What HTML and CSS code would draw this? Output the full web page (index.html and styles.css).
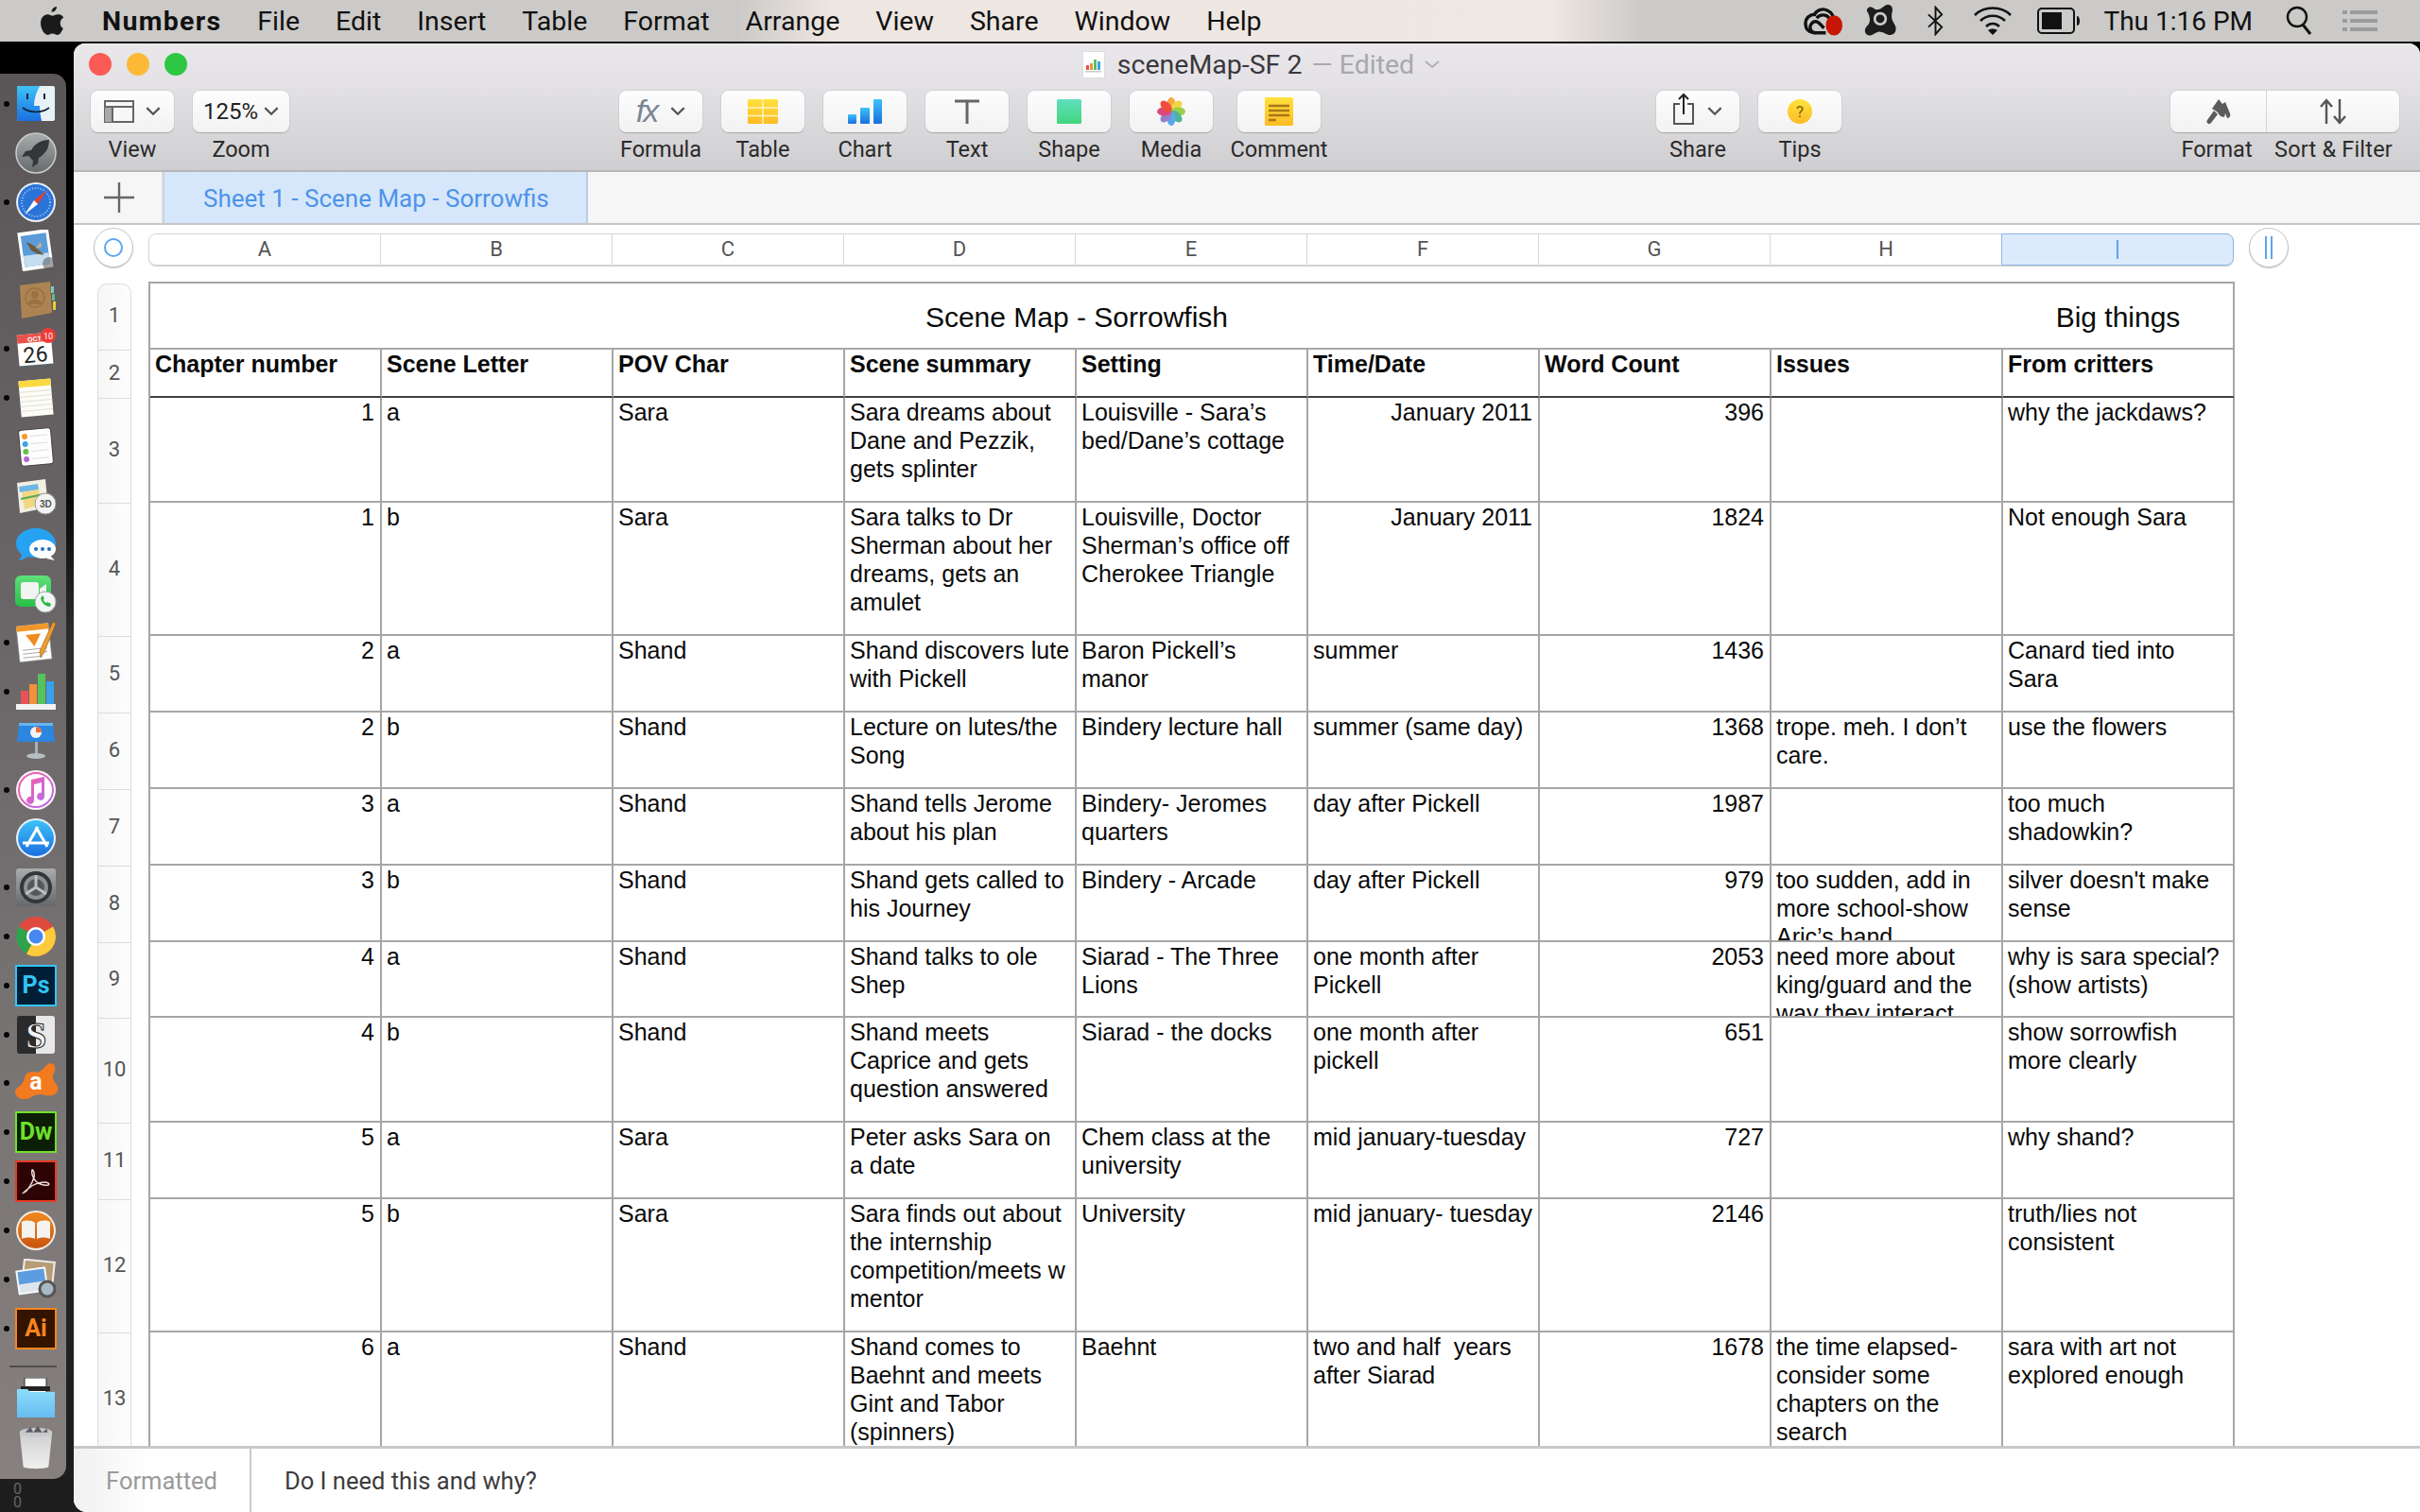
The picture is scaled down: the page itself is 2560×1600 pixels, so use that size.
FILE: index.html
```html
<!DOCTYPE html>
<html lang="en">
<head>
<meta charset="utf-8">
<title>sceneMap-SF 2 — Numbers</title>
<link rel="stylesheet" href="styles.css">
</head>
<body>
<svg class="defs" aria-hidden="true">
  <defs>
    <linearGradient id="gBlue" x1="0" y1="0" x2="0" y2="1"><stop offset="0" stop-color="#3dc2f8"/><stop offset="1" stop-color="#1a6fdf"/></linearGradient>
    <linearGradient id="gGray" x1="0" y1="0" x2="0" y2="1"><stop offset="0" stop-color="#a9adae"/><stop offset="1" stop-color="#66696b"/></linearGradient>
    <linearGradient id="gYellow" x1="0" y1="0" x2="0" y2="1"><stop offset="0" stop-color="#ffe23c"/><stop offset="1" stop-color="#fdbb26"/></linearGradient>
    <linearGradient id="gGreen" x1="0" y1="0" x2="0" y2="1"><stop offset="0" stop-color="#5fe07a"/><stop offset="1" stop-color="#27bf45"/></linearGradient>
    <linearGradient id="gOrange" x1="0" y1="0" x2="0" y2="1"><stop offset="0" stop-color="#f08a20"/><stop offset="1" stop-color="#c9530f"/></linearGradient>
    <linearGradient id="gFolder" x1="0" y1="0" x2="0" y2="1"><stop offset="0" stop-color="#8edcfb"/><stop offset="1" stop-color="#66bdf0"/></linearGradient>
    <linearGradient id="gMusic" x1="0" y1="0" x2="1" y2="1"><stop offset="0" stop-color="#f95fa0"/><stop offset="1" stop-color="#b86cf0"/></linearGradient>
    <linearGradient id="gShape" x1="0" y1="0" x2="0" y2="1"><stop offset="0" stop-color="#5fdfc0"/><stop offset="1" stop-color="#42d67e"/></linearGradient>
    <linearGradient id="gTrash" x1="0" y1="0" x2="0" y2="1"><stop offset="0" stop-color="#cfcfd1"/><stop offset="1" stop-color="#f0f0f0"/></linearGradient>
  </defs>
</svg>

<header class="menubar">
  <nav class="menu-left">
    <svg class="apple" viewBox="0 0 26 32"><path fill="#1a1a1a" d="M18 1c.2 3-2.600 6-5.400 5.700C12.300 3.800 15.200 1.100 18 1zM24.800 24c-1.400 3.200-3.300 7-5.900 7-2.200 0-2.800-1.400-5.400-1.400S10.300 31 8.300 31C5 31 1 24.500 1 18.600 1 12.800 4.600 9.300 8.300 9.300c2.400 0 4 1.500 5.300 1.500 1.300 0 3.200-1.700 5.900-1.500 1.200 0 4.200.5 5.700 3.200-4.800 2.800-4.200 9.400-.4 11.500z"/></svg>
    <span class="menu-app">Numbers</span>
    <span>File</span><span>Edit</span><span>Insert</span><span>Table</span><span>Format</span><span>Arrange</span><span>View</span><span>Share</span><span>Window</span><span>Help</span>
  </nav>
  <div class="menu-right">
    <svg class="st-cc" viewBox="0 0 42 32"><g fill="none" stroke="#111" stroke-width="3.500"><path d="M13 29C6 29 2 25 2 19s5-10 10-10c2-5 9-7 14-4 5 2 7 7 6 11"/><path d="M24 29H13c-4 0-6-3-6-6s3-7 7-6c3 1 6 5 8 7"/><path d="M14 13c4-5 12-4 14 1"/></g><ellipse cx="33" cy="21" rx="9" ry="11" fill="#c81505"/></svg>
    <svg class="st-av" viewBox="0 0 34 34"><path fill="#1d1d1d" d="M24 1c4-1 6 3 5 7s-1 7 2 12c3 4 2 10-3 11-4 1-7-3-11-3-4-1-9 6-13 3-3-2-3-6 0-9s3-6 2-10C5 8 2 7 5 4c3-3 6 2 9 2 4 0 6-4 10-5z"/><circle cx="17" cy="15" r="5.500" fill="none" stroke="#ccc" stroke-width="2.500"/></svg>
    <svg class="st-bt" viewBox="0 0 20 32"><path fill="none" stroke="#111" stroke-width="2" d="M2 9l15 14-7 8V1l7 8L2 23"/></svg>
    <svg class="st-wifi" viewBox="0 0 42 32"><g fill="none" stroke="#111" stroke-width="2.600"><path d="M2 10C12 0 30 0 40 10"/><path d="M8 16c7-7 19-7 26 0"/><path d="M14 22c4-4 10-4 14 0"/></g><path fill="#111" d="M21 31l-5-5c3-2 7-2 10 0z"/></svg>
    <svg class="st-bat" viewBox="0 0 46 30"><rect x="1" y="2" width="38" height="26" rx="4" fill="none" stroke="#111" stroke-width="2"/><rect x="5" y="6" width="21" height="18" fill="#111"/><path d="M42 10c2 0 3 2 3 5s-1 5-3 5z" fill="#111"/></svg>
    <span class="clock">Thu 1:16 PM</span>
    <svg class="st-search" viewBox="0 0 28 32"><circle cx="12" cy="12" r="10" fill="none" stroke="#111" stroke-width="2.400"/><path d="M18 20l8 10" stroke="#111" stroke-width="3" fill="none"/></svg>
    <svg class="st-list" viewBox="0 0 37 22"><g fill="#9b9b9b"><rect width="5" height="4" y="0"/><rect x="8" width="29" height="4" y="0"/><rect width="5" height="4" y="9"/><rect x="8" width="29" height="4" y="9"/><rect width="5" height="4" y="18"/><rect x="8" width="29" height="4" y="18"/></g></svg>
  </div>
</header>

<div class="desktop">
  <aside class="dock-col">
    <div class="dock">
      <div class="dock-item running"><svg viewBox="0 0 44 44"><rect x="2" y="3" width="40" height="37" rx="2" fill="#e8f1f8"/><path d="M4 3h22c-4 8-6 14-6 21h6c0 6 1 11 2 16H4a2 2 0 0 1-2-2V5a2 2 0 0 1 2-2z" fill="url(#gBlue)"/><path d="M13 11v6M31 11v6" stroke="#223" stroke-width="2"/><path d="M8 26c8 6 20 6 28 0" fill="none" stroke="#123" stroke-width="1.600"/></svg></div>
      <div class="dock-item"><svg viewBox="0 0 44 44"><circle cx="22" cy="22" r="21" fill="url(#gGray)" stroke="#c9cccc" stroke-width="1.500"/><path d="M36 8c-9 0-15 4-19 11l-6 1-4 6 7-1 5 5-1 7 6-4 1-6c7-4 11-10 11-19z" fill="#34373a"/></svg></div>
      <div class="dock-item running"><svg viewBox="0 0 44 44"><circle cx="22" cy="22" r="21" fill="#e8eef4"/><circle cx="22" cy="22" r="19" fill="#2a73d8"/><circle cx="22" cy="22" r="15" fill="none" stroke="#a9cdf3" stroke-width="2" stroke-dasharray="1 2"/><path d="M34 9L20 20l4 4z" fill="#ee3b30"/><path d="M10 35l10-15 4 4z" fill="#fff"/></svg></div>
      <div class="dock-item"><svg viewBox="0 0 44 44"><g transform="rotate(-8 22 22)"><rect x="5" y="1" width="33" height="41" fill="#fff"/><rect x="8" y="5" width="27" height="33" fill="#5b9bd8"/><rect x="8" y="26" width="27" height="12" fill="#c6dcef"/><path d="M13 12c5 2 9 6 12 10l5 6-7-2-6-5z" fill="#6f5a3e"/><path d="M22 20l6-6 1 5z" fill="#c8b48c"/></g><circle cx="36" cy="36" r="7" fill="#555" opacity=".55"/></svg></div>
      <div class="dock-item"><svg viewBox="0 0 44 44"><path d="M5 7L37 3l2 33-32 6z" fill="#ad8451"/><circle cx="21" cy="20" r="10" fill="none" stroke="#987243" stroke-width="1.500"/><circle cx="21" cy="17" r="4" fill="#987243"/><path d="M13 27c2-7 14-7 16 0z" fill="#987243"/><rect x="38" y="8" width="3" height="7" fill="#7cc"/><rect x="39" y="16" width="3" height="7" fill="#6b8"/><rect x="40" y="24" width="3" height="9" fill="#ec3"/></svg></div>
      <div class="dock-item running"><svg viewBox="0 0 44 44"><g transform="rotate(-5 22 22)"><rect x="3" y="8" width="36" height="33" fill="#5a6468"/><rect x="3" y="6" width="36" height="33" fill="#fff"/><rect x="3" y="6" width="36" height="9" fill="#e9524b"/><text x="14" y="14" class="cal-m">OCT</text><text x="8" y="36" class="cal-d">26</text></g><circle cx="35" cy="8" r="8" fill="#ee3a35"/><text x="30" y="12" class="cal-b">10</text></svg></div>
      <div class="dock-item running"><svg viewBox="0 0 44 44"><g transform="rotate(-5 22 22)"><rect x="5" y="3" width="34" height="38" fill="#fdfdf5"/><rect x="5" y="3" width="34" height="7" fill="#fbd940"/><path d="M5 15h34M5 20h34M5 25h34M5 30h34M5 35h34" stroke="#ddd" stroke-width="1"/></g></svg></div>
      <div class="dock-item"><svg viewBox="0 0 44 44"><g transform="rotate(-5 22 22)"><rect x="5" y="3" width="34" height="38" rx="3" fill="#fdfdfd" stroke="#444"/><circle cx="11" cy="10" r="3" fill="#f79a2c"/><circle cx="11" cy="18" r="3" fill="#3aa4ee"/><circle cx="11" cy="26" r="3" fill="#62c246"/><circle cx="11" cy="34" r="3" fill="#b55fd6"/><path d="M17 10h18M17 18h18M17 26h18M17 34h18" stroke="#ddd"/></g></svg></div>
      <div class="dock-item"><svg viewBox="0 0 44 44"><path d="M2 8l30-4 3 30-30 6z" fill="#f3efe3"/><path d="M4 12l20-3 1 6-20 3z" fill="#6fb4e6"/><path d="M7 18l18-3 3 16-18 5z" fill="#f2d783"/><path d="M6 25l24-5" stroke="#5ba852" stroke-width="2"/><circle cx="32" cy="30" r="11" fill="#f3f3f3" stroke="#999"/><text x="26" y="34" class="map-3d">3D</text></svg></div>
      <div class="dock-item"><svg viewBox="0 0 44 44"><path d="M22 5C10 5 1 12 1 21c0 5 3 9 6 12 0 2-2 5-4 6 4 0 8-2 10-4 3 1 6 1 9 1 12 0 21-7 21-15S34 5 22 5z" fill="#27a1f2"/><ellipse cx="29" cy="27" rx="14" ry="10" fill="#fff"/><path d="M37 34l5 5-9-2z" fill="#fff"/><circle cx="22" cy="27" r="2" fill="#1f6fc0"/><circle cx="29" cy="27" r="2" fill="#1f6fc0"/><circle cx="36" cy="27" r="2" fill="#1f6fc0"/></svg></div>
      <div class="dock-item"><svg viewBox="0 0 44 44"><rect x="0" y="3" width="38" height="33" rx="6" fill="url(#gGreen)"/><rect x="6" y="10" width="19" height="18" rx="3" fill="#f2f4f2"/><path d="M26 17l7-5v16l-7-5z" fill="#f2f4f2"/><circle cx="32" cy="31" r="11" fill="#f3f5f3" stroke="#9aa"/><path d="M27 27c1 5 5 9 10 9l1-3-4-2-1 1c-2-1-3-2-3-4l1-1-2-3z" fill="#2bb845"/></svg></div>
      <div class="dock-item running"><svg viewBox="0 0 44 44"><g transform="rotate(-6 20 22)"><rect x="3" y="3" width="34" height="38" fill="#fff" stroke="#999" stroke-width=".5"/><rect x="3" y="3" width="34" height="6" fill="#f0972b"/><path d="M12 13h16l-8 13z" fill="#ee8a22"/><path d="M7 29h26M7 33h26M7 37h20" stroke="#aaa"/></g><path d="M40 0l3 2-12 30-4 6-1-7z" fill="#ef9b2d" stroke="#7a4b12" stroke-width=".5"/></svg></div>
      <div class="dock-item running"><svg viewBox="0 0 44 44"><rect x="6" y="21" width="8" height="14" fill="#e9525a"/><rect x="15" y="14" width="8" height="21" fill="#f2913a"/><rect x="24" y="3" width="8" height="32" fill="#55c45c"/><rect x="33" y="11" width="8" height="24" fill="#3aa0ea"/><rect x="1" y="35" width="42" height="6" fill="#f2f2f2"/></svg></div>
      <div class="dock-item"><svg viewBox="0 0 44 44"><rect x="21" y="22" width="3" height="15" fill="#aab2ba"/><ellipse cx="22" cy="38" rx="10" ry="3" fill="#b7bec4"/><path d="M4 4h36l2 19H2z" fill="#2c85de"/><rect x="4" y="3" width="36" height="3" fill="#66b3f0"/><circle cx="22" cy="13" r="6" fill="#f3f3f3"/><path d="M22 13V7a6 6 0 0 1 6 6z" fill="#ee6c3a"/></svg></div>
      <div class="dock-item running"><svg viewBox="0 0 44 44"><circle cx="22" cy="22" r="21" fill="#fcf7fa"/><circle cx="22" cy="22" r="18" fill="#fff" stroke="url(#gMusic)" stroke-width="2"/><path d="M17 11l14-3v21a4 4 0 1 1-3-4V14l-8 2v17a4 4 0 1 1-3-4z" fill="url(#gMusic)"/></svg></div>
      <div class="dock-item"><svg viewBox="0 0 44 44"><circle cx="22" cy="22" r="21" fill="#eaf3fb"/><circle cx="22" cy="22" r="19" fill="url(#gBlue)"/><path d="M22 10l12 21M24 10L12 31M8 27h28" stroke="#fff" stroke-width="3" fill="none"/></svg></div>
      <div class="dock-item running"><svg viewBox="0 0 44 44"><rect x="1" y="2" width="42" height="40" rx="3" fill="url(#gGray)"/><circle cx="22" cy="22" r="17" fill="#33363a"/><circle cx="22" cy="22" r="13" fill="#8e9194"/><circle cx="22" cy="22" r="9" fill="#55585b"/><path d="M22 22V9M22 22l11 7M22 22L11 29" stroke="#bcbfc1" stroke-width="3"/></svg></div>
      <div class="dock-item running"><svg viewBox="0 0 44 44"><circle cx="22" cy="22" r="21" fill="#de4b3e"/><path d="M22 22L3.800 11.500A21 21 0 0 0 12 40.400z" fill="#2fa24e"/><path d="M22 22L12 40.400A21 21 0 0 0 40.200 11.500z" fill="#fbcb3c"/><circle cx="22" cy="22" r="10" fill="#fff"/><circle cx="22" cy="22" r="7.500" fill="#4688ef"/></svg></div>
      <div class="dock-item running"><svg viewBox="0 0 44 44"><rect x="1" y="1" width="42" height="42" fill="#001e36" stroke="#31c5f4" stroke-width="2"/><text x="22" y="30" class="ad-t ad-ps">Ps</text></svg></div>
      <div class="dock-item running"><svg viewBox="0 0 44 44"><rect x="2" y="2" width="40" height="40" rx="3" fill="#e8e8e8"/><path d="M4 2h18v40H4a2 2 0 0 1-2-2V4a2 2 0 0 1 2-2z" fill="#2b2b2b"/><text x="22" y="36" class="scriv">S</text></svg></div>
      <div class="dock-item running"><svg class="splat" viewBox="0 0 46 44"><path d="M35 3c5-3 9 2 7 7-2 4-3 7 0 11 4 4 5 11-1 13-7 3-11-2-17 0-6 1-8 6-16 4-6-2-8-8-4-11 5-3 7-7 8-12 1-4 6-5 11-4 5 1 8-5 12-8z" fill="#f47a20"/><text x="23" y="29" class="avast">a</text></svg></div>
      <div class="dock-item running"><svg viewBox="0 0 44 44"><rect x="1" y="1" width="42" height="42" fill="#0c1f05" stroke="#6fe02d" stroke-width="2"/><text x="22" y="30" class="ad-t ad-dw">Dw</text></svg></div>
      <div class="dock-item running"><svg viewBox="0 0 44 44"><rect x="1" y="1" width="42" height="42" fill="#2e0303" stroke="#e63b24" stroke-width="2"/><path d="M9 34c4-1 9-10 11-16 1-4-1-9-2-8-1 2 0 8 4 12 3 3 9 5 13 4 2-1 0-3-4-3-6 0-13 3-16 6-3 2-6 5-6 5z" fill="none" stroke="#eadada" stroke-width="1.500"/></svg></div>
      <div class="dock-item running"><svg viewBox="0 0 44 44"><circle cx="22" cy="22" r="21" fill="#f2ece4"/><circle cx="22" cy="22" r="19" fill="url(#gOrange)"/><path d="M21 14c-4-3-10-3-14-1v18c4-2 10-2 14 0zM23 14c4-3 10-3 14-1v18c-4-2-10-2-14 0z" fill="#f5f3ef"/></svg></div>
      <div class="dock-item running"><svg viewBox="0 0 44 44"><g transform="rotate(6 22 20)"><rect x="8" y="2" width="32" height="26" fill="#b79c75" stroke="#eee" stroke-width="2"/></g><g transform="rotate(-8 20 24)"><rect x="2" y="10" width="32" height="26" fill="#f7f7f7"/><rect x="4" y="12" width="28" height="14" fill="#5d9ce0"/><rect x="4" y="25" width="28" height="9" fill="#dde5ec"/></g><circle cx="34" cy="32" r="8" fill="#a9b9c4" stroke="#555" stroke-width="3"/></svg></div>
      <div class="dock-item running"><svg viewBox="0 0 44 44"><rect x="1" y="1" width="42" height="42" fill="#321400" stroke="#f7851e" stroke-width="2"/><text x="22" y="30" class="ad-t ad-ai">Ai</text></svg></div>
      <div class="dock-sep"></div>
      <div class="dock-item dock-stack"><svg viewBox="0 0 44 44"><rect x="10" y="0" width="23" height="20" fill="#fff" stroke="#333"/><rect x="6" y="9" width="31" height="5" fill="#222"/><path d="M2 12h11l3 3h26v27H2z" fill="url(#gFolder)"/></svg></div>
      <div class="dock-item dock-trash"><svg viewBox="0 0 44 50"><path d="M4 9h36l-4 38c-1 3-27 3-28 0z" fill="url(#gTrash)"/><ellipse cx="22" cy="9" rx="18" ry="5" fill="#c9c9cc"/><path d="M10 9l6-6 3 6 5-7 5 7 5-4 1 4z" fill="#5c5c66"/></svg></div>
    </div>
    <div class="ruler"><span>0</span><span>0</span></div>
  </aside>

  <main class="window">
    <div class="chrome">
      <div class="titlebar">
        <div class="lights"><i class="light red"></i><i class="light amber"></i><i class="light green"></i></div>
        <div class="title">
          <svg class="doc-icon" viewBox="0 0 24 29"><rect x=".5" y=".5" width="23" height="28" fill="#fff" stroke="#ddd"/><rect x="4" y="15" width="3" height="5" fill="#e8524a"/><rect x="8" y="13" width="3" height="7" fill="#f2913a"/><rect x="12" y="9" width="3" height="11" fill="#55c45c"/><rect x="16" y="11" width="3" height="9" fill="#3aa0ea"/><rect x="3" y="21" width="17" height="1.500" fill="#ccc"/></svg>
          <span class="title-name">sceneMap-SF 2</span><span class="title-state">— Edited</span>
          <svg class="title-chev" viewBox="0 0 16 10"><path d="M1 2l7 6 7-6" fill="none" stroke="#b0afb1" stroke-width="2"/></svg>
        </div>
        <div></div>
      </div>
      <div class="toolbar">
        <div class="tgroup">
          <div class="tool"><div class="tbtn w88"><svg class="ic-view" viewBox="0 0 32 24"><rect x="1" y="1" width="30" height="22" fill="#f7f7f7" stroke="#666" stroke-width="2"/><rect x="1" y="7" width="8" height="16" fill="#a9a9a9"/><path d="M1 7h30M9 7v16" stroke="#666" stroke-width="2"/></svg><svg class="chev" viewBox="0 0 14 9"><path d="M1 1l6 6 6-6" fill="none" stroke="#555" stroke-width="2"/></svg></div><span>View</span></div>
          <div class="tool"><div class="tbtn w102"><span class="zoomval">125%</span><svg class="chev" viewBox="0 0 14 9"><path d="M1 1l6 6 6-6" fill="none" stroke="#555" stroke-width="2"/></svg></div><span>Zoom</span></div>
        </div>
        <div class="tgroup g-insert">
          <div class="tool"><div class="tbtn w88"><span class="fx">fx</span><svg class="chev" viewBox="0 0 14 9"><path d="M1 1l6 6 6-6" fill="none" stroke="#555" stroke-width="2"/></svg></div><span>Formula</span></div>
          <div class="tool"><div class="tbtn w88"><svg class="ic32" viewBox="0 0 32 26"><rect width="32" height="26" rx="1.500" fill="url(#gYellow)"/><path d="M0 9h32M0 17.500h32M16 0v26" stroke="#fff4c0" stroke-width="1.500"/></svg></div><span>Table</span></div>
          <div class="tool"><div class="tbtn w88"><svg class="ic36" viewBox="0 0 36 26"><rect x="0" y="16" width="9" height="10" rx="1" fill="url(#gBlue)"/><rect x="13" y="9" width="10" height="17" rx="1" fill="url(#gBlue)"/><rect x="27" y="0" width="9" height="26" rx="1" fill="url(#gBlue)"/></svg></div><span>Chart</span></div>
          <div class="tool"><div class="tbtn w88"><svg class="ic26" viewBox="0 0 26 26"><path d="M0 2h26M13 2v24" stroke="#666" stroke-width="3" fill="none"/></svg></div><span>Text</span></div>
          <div class="tool"><div class="tbtn w88"><svg class="ic26" viewBox="0 0 26 26"><rect width="26" height="26" rx="1.500" fill="url(#gShape)"/></svg></div><span>Shape</span></div>
          <div class="tool"><div class="tbtn w88"><svg class="ic30" viewBox="0 0 30 30"><g opacity=".9"><ellipse cx="15" cy="7.500" rx="4.500" ry="7.500" fill="#f6a02c"/><ellipse cx="15" cy="7.500" rx="4.500" ry="7.500" fill="#efd22d" transform="rotate(45 15 15)"/><ellipse cx="15" cy="7.500" rx="4.500" ry="7.500" fill="#8fca3a" transform="rotate(90 15 15)"/><ellipse cx="15" cy="7.500" rx="4.500" ry="7.500" fill="#39b08c" transform="rotate(135 15 15)"/><ellipse cx="15" cy="7.500" rx="4.500" ry="7.500" fill="#4d9fe8" transform="rotate(180 15 15)"/><ellipse cx="15" cy="7.500" rx="4.500" ry="7.500" fill="#8a70c4" transform="rotate(225 15 15)"/><ellipse cx="15" cy="7.500" rx="4.500" ry="7.500" fill="#d6356f" transform="rotate(270 15 15)"/><ellipse cx="15" cy="7.500" rx="4.500" ry="7.500" fill="#ef3a28" transform="rotate(315 15 15)"/></g></svg></div><span>Media</span></div>
          <div class="tool tool-comment"><div class="tbtn w88"><svg class="ic30" viewBox="0 0 30 30"><rect width="30" height="30" rx="1.500" fill="url(#gYellow)"/><path d="M4 9h22M4 14h22M4 19h22M4 24h8" stroke="#a9771b" stroke-width="2.500"/></svg></div><span>Comment</span></div>
        </div>
        <div class="tgroup g-share">
          <div class="tool"><div class="tbtn w88"><svg class="ic-share" viewBox="0 0 22 34"><path d="M7 12H1v21h20V12h-6" fill="none" stroke="#555" stroke-width="2"/><path d="M11 23V2M6 7l5-5 5 5" fill="none" stroke="#222" stroke-width="2"/></svg><svg class="chev" viewBox="0 0 14 9"><path d="M1 1l6 6 6-6" fill="none" stroke="#555" stroke-width="2"/></svg></div><span>Share</span></div>
          <div class="tool"><div class="tbtn w88"><svg class="ic-tips" viewBox="0 0 26 26"><circle cx="13" cy="13" r="13" fill="url(#gYellow)"/><text x="13" y="19" class="tips-q">?</text></svg></div><span>Tips</span></div>
        </div>
        <div class="tgroup g-inspect">
          <div class="tool-pair">
            <div class="tbtn-pair"><div class="pair-cell cell-format"><svg class="ic30" viewBox="0 0 30 30"><path d="M15 2l4 5 3-2 5 12c1 3-1 5-3 5l-2-5-1 4-4-1-4-5-5-3z" fill="#5c5c5c"/><path d="M10 14l-7 10a2.500 2.500 0 1 0 4 3l7-9" fill="#5c5c5c"/></svg></div><div class="pair-cell cell-sort"><svg class="ic-sort" viewBox="0 0 30 28"><path d="M8 27V2M2 9l6-7 6 7" fill="none" stroke="#555" stroke-width="2.400"/><path d="M22 1v25M16 19l6 7 6-7" fill="none" stroke="#555" stroke-width="2.400"/></svg></div></div>
            <div class="pair-labels"><span class="lab-format">Format</span><span class="lab-sort">Sort &amp; Filter</span></div>
          </div>
        </div>
      </div>
    </div>

    <div class="tabbar">
      <div class="addsheet"><svg viewBox="0 0 32 32"><path d="M0 16h32M16 0v32" stroke="#666" stroke-width="2.400"/></svg></div>
      <div class="sheet-tab">Sheet 1 - Scene Map - Sorrowfis</div>
    </div>

    <div class="sheet">
      <div class="colstrip">
        <div class="corner"><i class="corner-ring"></i></div>
        <div class="colhead">
          <div>A</div><div>B</div><div>C</div><div>D</div><div>E</div><div>F</div><div>G</div><div>H</div><div class="col-sel"><i class="ibar"></i></div>
        </div>
        <div class="corner"><i class="pause"></i><i class="pause"></i></div>
      </div>
      <div class="sheet-body">
        <div class="rowhead">
          <div>1</div><div>2</div><div>3</div><div>4</div><div>5</div><div>6</div><div>7</div><div>8</div><div>9</div><div>10</div><div>11</div><div>12</div><div>13</div>
        </div>
        <div class="table">
          <div class="c title-cell">Scene Map - Sorrowfish</div>
          <div class="c title-side">Big things</div>

          <div class="c h">Chapter number</div><div class="c h">Scene Letter</div><div class="c h">POV Char</div><div class="c h">Scene summary</div><div class="c h">Setting</div><div class="c h">Time/Date</div><div class="c h">Word Count</div><div class="c h">Issues</div><div class="c h">From critters</div>

          <div class="c r">1</div><div class="c">a</div><div class="c">Sara</div><div class="c">Sara dreams about Dane and Pezzik, gets splinter</div><div class="c">Louisville - Sara’s bed/Dane’s cottage</div><div class="c r">January 2011</div><div class="c r">396</div><div class="c"></div><div class="c">why the jackdaws?</div>

          <div class="c r">1</div><div class="c">b</div><div class="c">Sara</div><div class="c">Sara talks to Dr Sherman about her dreams, gets an amulet</div><div class="c">Louisville, Doctor Sherman’s office off Cherokee Triangle</div><div class="c r">January 2011</div><div class="c r">1824</div><div class="c"></div><div class="c">Not enough Sara</div>

          <div class="c r">2</div><div class="c">a</div><div class="c">Shand</div><div class="c">Shand discovers lute with Pickell</div><div class="c">Baron Pickell’s manor</div><div class="c">summer</div><div class="c r">1436</div><div class="c"></div><div class="c">Canard tied into Sara</div>

          <div class="c r">2</div><div class="c">b</div><div class="c">Shand</div><div class="c">Lecture on lutes/the Song</div><div class="c">Bindery lecture hall</div><div class="c">summer (same day)</div><div class="c r">1368</div><div class="c">trope. meh. I don’t care.</div><div class="c">use the flowers</div>

          <div class="c r">3</div><div class="c">a</div><div class="c">Shand</div><div class="c">Shand tells Jerome about his plan</div><div class="c">Bindery- Jeromes quarters</div><div class="c">day after Pickell</div><div class="c r">1987</div><div class="c"></div><div class="c">too much shadowkin?</div>

          <div class="c r">3</div><div class="c">b</div><div class="c">Shand</div><div class="c">Shand gets called to his Journey</div><div class="c">Bindery - Arcade</div><div class="c">day after Pickell</div><div class="c r">979</div><div class="c">too sudden, add in more school-show Aric’s hand</div><div class="c">silver doesn't make sense</div>

          <div class="c r">4</div><div class="c">a</div><div class="c">Shand</div><div class="c">Shand talks to ole Shep</div><div class="c">Siarad - The Three Lions</div><div class="c">one month after Pickell</div><div class="c r">2053</div><div class="c">need more about king/guard and the way they interact</div><div class="c">why is sara special? (show artists)</div>

          <div class="c r">4</div><div class="c">b</div><div class="c">Shand</div><div class="c">Shand meets Caprice and gets question answered</div><div class="c">Siarad - the docks</div><div class="c">one month after pickell</div><div class="c r">651</div><div class="c"></div><div class="c">show sorrowfish more clearly</div>

          <div class="c r">5</div><div class="c">a</div><div class="c">Sara</div><div class="c">Peter asks Sara on<br>a date</div><div class="c">Chem class at the university</div><div class="c">mid january-tuesday</div><div class="c r">727</div><div class="c"></div><div class="c">why shand?</div>

          <div class="c r">5</div><div class="c">b</div><div class="c">Sara</div><div class="c">Sara finds out about the internship competition/meets w mentor</div><div class="c">University</div><div class="c">mid january- tuesday</div><div class="c r">2146</div><div class="c"></div><div class="c">truth/lies not consistent</div>

          <div class="c r">6</div><div class="c">a</div><div class="c">Shand</div><div class="c">Shand comes to Baehnt and meets Gint and Tabor (spinners)</div><div class="c">Baehnt</div><div class="c">two and half&nbsp; years after Siarad</div><div class="c r">1678</div><div class="c">the time elapsed- consider some chapters on the search</div><div class="c">sara with art not explored enough</div>
        </div>
      </div>
    </div>

    <footer class="formulabar">
      <div class="fb-style">Formatted</div>
      <div class="fb-text">Do I need this and why?</div>
    </footer>
  </main>
</div>
</body>
</html>
```
FILE: styles.css
```css
* { box-sizing: border-box; }
html, body { margin: 0; height: 100%; overflow: hidden; }
body {
  width: 2560px; height: 1600px; display: flex; flex-direction: column;
  font-family: Roboto, "Liberation Sans", sans-serif; background: #000; color: #222;
}
.defs { width: 0; height: 0; position: absolute; }

/* menu bar */
.menubar {
  height: 46px; flex: none; display: flex; justify-content: space-between; align-items: center;
  border-bottom: 2px solid #060606;
  background: linear-gradient(90deg, #cbcac8 0, #cbcac8 780px, #eee6e1 880px, #efe7e2 1640px, #cbcac8 1740px, #cbcac8 100%);
}
.menu-left { display: flex; align-items: center; gap: 38px; padding-left: 42px; font-size: 28.5px; color: #111; }
.apple { width: 26px; height: 32px; margin-right: 2px; }
.menu-app { font-weight: 700; letter-spacing: 1.300px; }
.menu-right { display: flex; align-items: center; padding-right: 45px; }
.menu-right svg { flex: none; }
.st-cc { width: 41px; height: 32px; }
.st-av { width: 36px; height: 36px; margin-left: 22px; }
.st-bt { width: 19px; height: 32px; margin-left: 31px; }
.st-wifi { width: 42px; height: 32px; margin-left: 30px; }
.st-bat { width: 46px; height: 30px; margin-left: 26px; }
.clock { font-size: 28px; color: #111; margin-left: 24px; }
.st-search { width: 28px; height: 32px; margin-left: 35px; }
.st-list { width: 37px; height: 22px; margin-left: 32px; }

/* desktop + dock */
.desktop { flex: 1; display: flex; min-height: 0; background: linear-gradient(#000 0, #000 450px, #2c2c2c 620px, #1d1d1d 100%); }
.dock-col { width: 78px; flex: none; display: flex; flex-direction: column; padding-top: 32px; }
.dock {
  width: 70px; height: 1487px; flex: none; padding-top: 6px;
  border-radius: 0 14px 14px 0;
  background: linear-gradient(#5a5657 0, #6d696a 45%, #86817f 100%);
}
.dock-item { height: 51.84px; display: flex; align-items: center; justify-content: center; position: relative; padding-left: 6px; }
.dock-item svg { width: 44px; height: 44px; }
.dock-item svg.splat { width: 48px; height: 46px; }
.dock-item.running::before { content: ""; position: absolute; left: 4px; top: 50%; width: 6px; height: 6px; margin-top: -3px; border-radius: 50%; background: #050505; }
.dock-sep { height: 2px; margin: 13px 10px 10px; background: #4f4c4d; }
.dock-stack { height: 46px; }
.dock-trash { height: 52px; padding-top: 4px; }
.dock-trash svg { width: 42px; height: 48px; }
.cal-m { font: 700 7px "Liberation Sans", sans-serif; fill: #fff; }
.cal-d { font: 400 23px Roboto, sans-serif; fill: #222; }
.cal-b { font: 400 9px Roboto, sans-serif; fill: #fff; }
.map-3d { font: 700 10px "Liberation Sans", sans-serif; fill: #555; }
.ad-t { font: 700 25px Roboto, sans-serif; text-anchor: middle; }
.ad-ps { fill: #31c5f4; } .ad-dw { fill: #6fe02d; } .ad-ai { fill: #f7851e; }
.scriv { font: 700 40px "Liberation Serif", serif; fill: #f4f4f4; text-anchor: middle; stroke: #222; stroke-width: 1; }
.avast { font: 700 24px Roboto, sans-serif; fill: #fff; text-anchor: middle; }
.ruler { display: flex; flex-direction: column; padding: 4px 0 0 14px; color: #666; font-size: 16px; line-height: 14px; }

/* window */
.window {
  flex: 1; min-width: 0; display: flex; flex-direction: column; overflow: hidden;
  background: #fff; border-radius: 12px 12px 0 14px;
}
.chrome { height: 136px; flex: none; background: linear-gradient(#e9e7ea 0, #e4e2e6 30%, #cfced0 100%); border-bottom: 2px solid #b6b5b7; box-shadow: inset 0 1px 0 #f6f5f7; }
.titlebar { height: 50px; padding-bottom: 6px; display: grid; grid-template-columns: 1fr auto 1fr; align-items: center; }
.lights { display: flex; gap: 16px; padding-left: 16px; }
.light { width: 24px; height: 24px; border-radius: 50%; }
.red { background: #fb5a55; } .amber { background: #fcb938; } .green { background: #2ec744; }
.title { display: flex; align-items: center; margin-left: 30px; font-size: 28.5px; }
.doc-icon { width: 24px; height: 29px; margin-right: 13px; }
.title-name { color: #3a383c; }
.title-state { color: #a9a8aa; margin-left: 10px; }
.title-chev { width: 16px; height: 10px; margin-left: 11px; }

.toolbar { display: flex; padding-left: 18px; }
.tgroup { display: flex; gap: 20px; flex: none; }
.g-insert { margin-left: 349px; }
.g-share { margin-left: 355px; }
.g-inspect { margin-left: 348px; }
.tool { display: flex; flex-direction: column; align-items: center; font-size: 23.5px; color: #2a2a2a; white-space: nowrap; }
.tool > span { margin-top: 5px; line-height: 26px; width: 0; display: flex; justify-content: center; }
.tool-comment { margin-left: 6px; }
.tbtn, .tbtn-pair {
  height: 44px; display: flex; align-items: center; justify-content: center;
  background: linear-gradient(#fdfdfd, #f2f2f3); border-radius: 8px;
  box-shadow: 0 1px 1px #a7a6a8, 0 0 0 1px #d5d4d6;
}
.w88 { width: 88px; } .w102 { width: 102px; }
.chev { width: 16px; height: 10px; margin-left: 6px; flex: none; }
.ic-view { width: 32px; height: 24px; margin-right: 6px; }
.zoomval { font-size: 24px; color: #222; }
.fx { font: italic 400 34px "Liberation Sans", sans-serif; color: #7b8694; margin: -2px 8px 0 0; letter-spacing: -2px; }
.ic32 { width: 32px; height: 26px; } .ic36 { width: 36px; height: 26px; } .ic26 { width: 26px; height: 26px; } .ic30 { width: 30px; height: 30px; }
.ic-share { width: 22px; height: 34px; margin: -6px 8px 0 0; }
.ic-tips { width: 26px; height: 26px; }
.tips-q { font: 400 17px Roboto, sans-serif; fill: #7a5b10; text-anchor: middle; }
.tool-pair { width: 242px; display: flex; flex-direction: column; }
.tbtn-pair { width: 242px; justify-content: flex-start; }
.pair-cell { height: 44px; display: flex; align-items: center; justify-content: center; }
.cell-format { width: 102px; border-right: 1px solid #d5d4d6; }
.cell-sort { flex: 1; }
.ic-sort { width: 30px; height: 28px; }
.pair-labels { display: flex; margin-top: 5px; line-height: 26px; font-size: 23.5px; color: #2a2a2a; white-space: nowrap; }
.lab-format { width: 98px; text-align: center; }
.lab-sort { flex: 1; padding-left: 5px; letter-spacing: .2px; text-align: center; }

/* sheet tab bar */
.tabbar { height: 56px; flex: none; display: flex; background: #f6f6f6; border-bottom: 2px solid #c6c6c8; }
.addsheet { width: 95px; display: flex; align-items: center; padding-left: 32px; border-right: 2px solid #dcdcdc; }
.addsheet svg { width: 32px; height: 32px; }
.sheet-tab { width: 449px; background: #d7e7fb; border-right: 2px solid #b9cde6; border-left: 1px solid #b9cde6; color: #4d93e9; font-size: 26px; line-height: 56px; padding-left: 41px; white-space: nowrap; overflow: hidden; }

/* spreadsheet */
.sheet { flex: 1; min-height: 0; overflow: hidden; background: #fff; --rows: 70px 51px 111px 141px 81px 81px 81px 81px 80px 111px 81px 141px 141px; }
.colstrip { height: 60px; display: flex; align-items: flex-start; padding: 3px 0 0 21px; }
.corner { width: 42px; height: 42px; flex: none; border-radius: 50%; border: 1px solid #c5c5c7; box-shadow: 0 1px 1px #ccc; background: #fff; display: flex; align-items: center; justify-content: center; gap: 4px; }
.corner-ring { width: 20px; height: 20px; border-radius: 50%; border: 2px solid #5aa5ee; }
.pause { width: 2px; height: 24px; background: #5aa5ee; }
.colhead { width: 2206px; height: 34px; margin: 6px 16px 0; flex: none; display: grid; grid-template-columns: repeat(8, 245px) 1fr; border: 1px solid #d4d4d6; border-radius: 8px; box-shadow: 0 1px 1px #ccc; font-size: 22px; color: #555; text-align: center; line-height: 32px; }
.colhead > div { border-right: 1px solid #d9d9db; }
.colhead > .col-sel { display: flex; align-items: center; justify-content: center; background: #dcebfc; border: 1px solid #8eb6e4; margin: -1px; border-radius: 0 8px 8px 0; }
.ibar { width: 2px; height: 20px; background: #5aa5ee; }

.sheet-body { display: flex; align-items: flex-start; padding-left: 25px; }
.rowhead { width: 36px; flex: none; margin-top: 2px; display: grid; grid-template-rows: var(--rows); border: 1px solid #dcdcdc; border-bottom: 0; border-radius: 10px 10px 0 0; background: linear-gradient(90deg, #f6f6f6, #fefefe); font-size: 22px; color: #555; }
.rowhead > div { display: flex; align-items: center; justify-content: center; border-bottom: 1px solid #dcdcdc; padding-bottom: 4px; }
.table {
  margin-left: 18px; flex: none; display: grid; grid-template-columns: repeat(9, 245px); grid-template-rows: var(--rows);
  border-top: 2px solid #a6a6a6; border-left: 2px solid #a6a6a6;
  font: 25px/30px "Liberation Sans", Arial, sans-serif; color: #0a0a0a;
}
.c { padding: 0 2px 0 5px; overflow: hidden; border-right: 2px solid #a6a6a6; border-bottom: 2px solid #a6a6a6; }
.r { text-align: right; padding-right: 6px; }
.h { font-weight: 700; border-bottom-color: #3f3f3f; }
.title-cell { grid-column: span 8; border-right: 0; font-size: 30px; text-align: center; display: flex; align-items: center; justify-content: center; padding: 4px 0 0; }
.title-side { font-size: 30px; display: flex; align-items: center; justify-content: center; padding: 4px 0 0; white-space: nowrap; }

/* formula bar */
.formulabar { height: 70px; flex: none; display: flex; background: #fff; border-top: 3px solid #c9c9cb; }
.fb-style { width: 188px; display: flex; align-items: center; justify-content: center; font-size: 25.5px; color: #9a9a9a; border-right: 2px solid #c9c9cb; background: linear-gradient(90deg, #f1f1f1, #fff 45%); }
.fb-text { display: flex; align-items: center; padding-left: 35px; font-size: 25.5px; color: #3c3c3c; }
```
